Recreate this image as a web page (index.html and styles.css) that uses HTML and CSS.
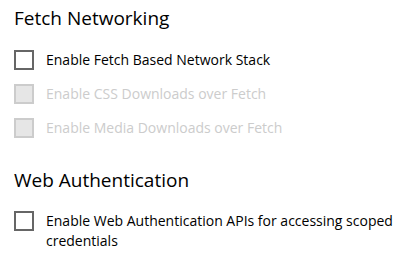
FILE: index.html
```html
<!DOCTYPE html>
<html>
<head>
<meta charset="utf-8">
<link rel="stylesheet" href="styles.css">
</head>
<body>
<div class="page">
  <section class="group">
    <h2 class="group-title">Fetch Networking</h2>
    <div class="options">
      <label class="option">
        <span class="box"></span>
        <span class="text">Enable Fetch Based Network Stack</span>
      </label>
      <label class="option disabled">
        <span class="box"></span>
        <span class="text">Enable CSS Downloads over Fetch</span>
      </label>
      <label class="option disabled">
        <span class="box"></span>
        <span class="text">Enable Media Downloads over Fetch</span>
      </label>
    </div>
  </section>
  <section class="group second">
    <h2 class="group-title">Web Authentication</h2>
    <div class="options">
      <label class="option">
        <span class="box"></span>
        <span class="text">Enable Web Authentication APIs for accessing scoped credentials</span>
      </label>
    </div>
  </section>
</div>
</body>
</html>
```
FILE: styles.css
```css
html, body {
  margin: 0;
  background: #ffffff;
}
.page {
  font-family: "Open Sans", "Noto Sans", sans-serif;
  color: #000;
  padding: 4px 6px 0 14px;
}
.group-title {
  margin: 0;
  font-size: 19px;
  line-height: 28px;
  font-weight: 400;
}
.options {
  display: flex;
  flex-direction: column;
  gap: 14px;
  margin-top: 18px;
}
.second {
  margin-top: 28px;
}
.second .options {
  margin-top: 17px;
}
.option {
  display: flex;
  align-items: flex-start;
  gap: 12px;
}
.box {
  flex: none;
  width: 20px;
  height: 20px;
  box-sizing: border-box;
  border: 2px solid #666;
  background: #fff;
}
.text {
  font-size: 14px;
  line-height: 20px;
}
.disabled .box {
  border-color: #cccccc;
  background: #e6e6e6;
}
.disabled .text {
  color: #cccccc;
}
```
